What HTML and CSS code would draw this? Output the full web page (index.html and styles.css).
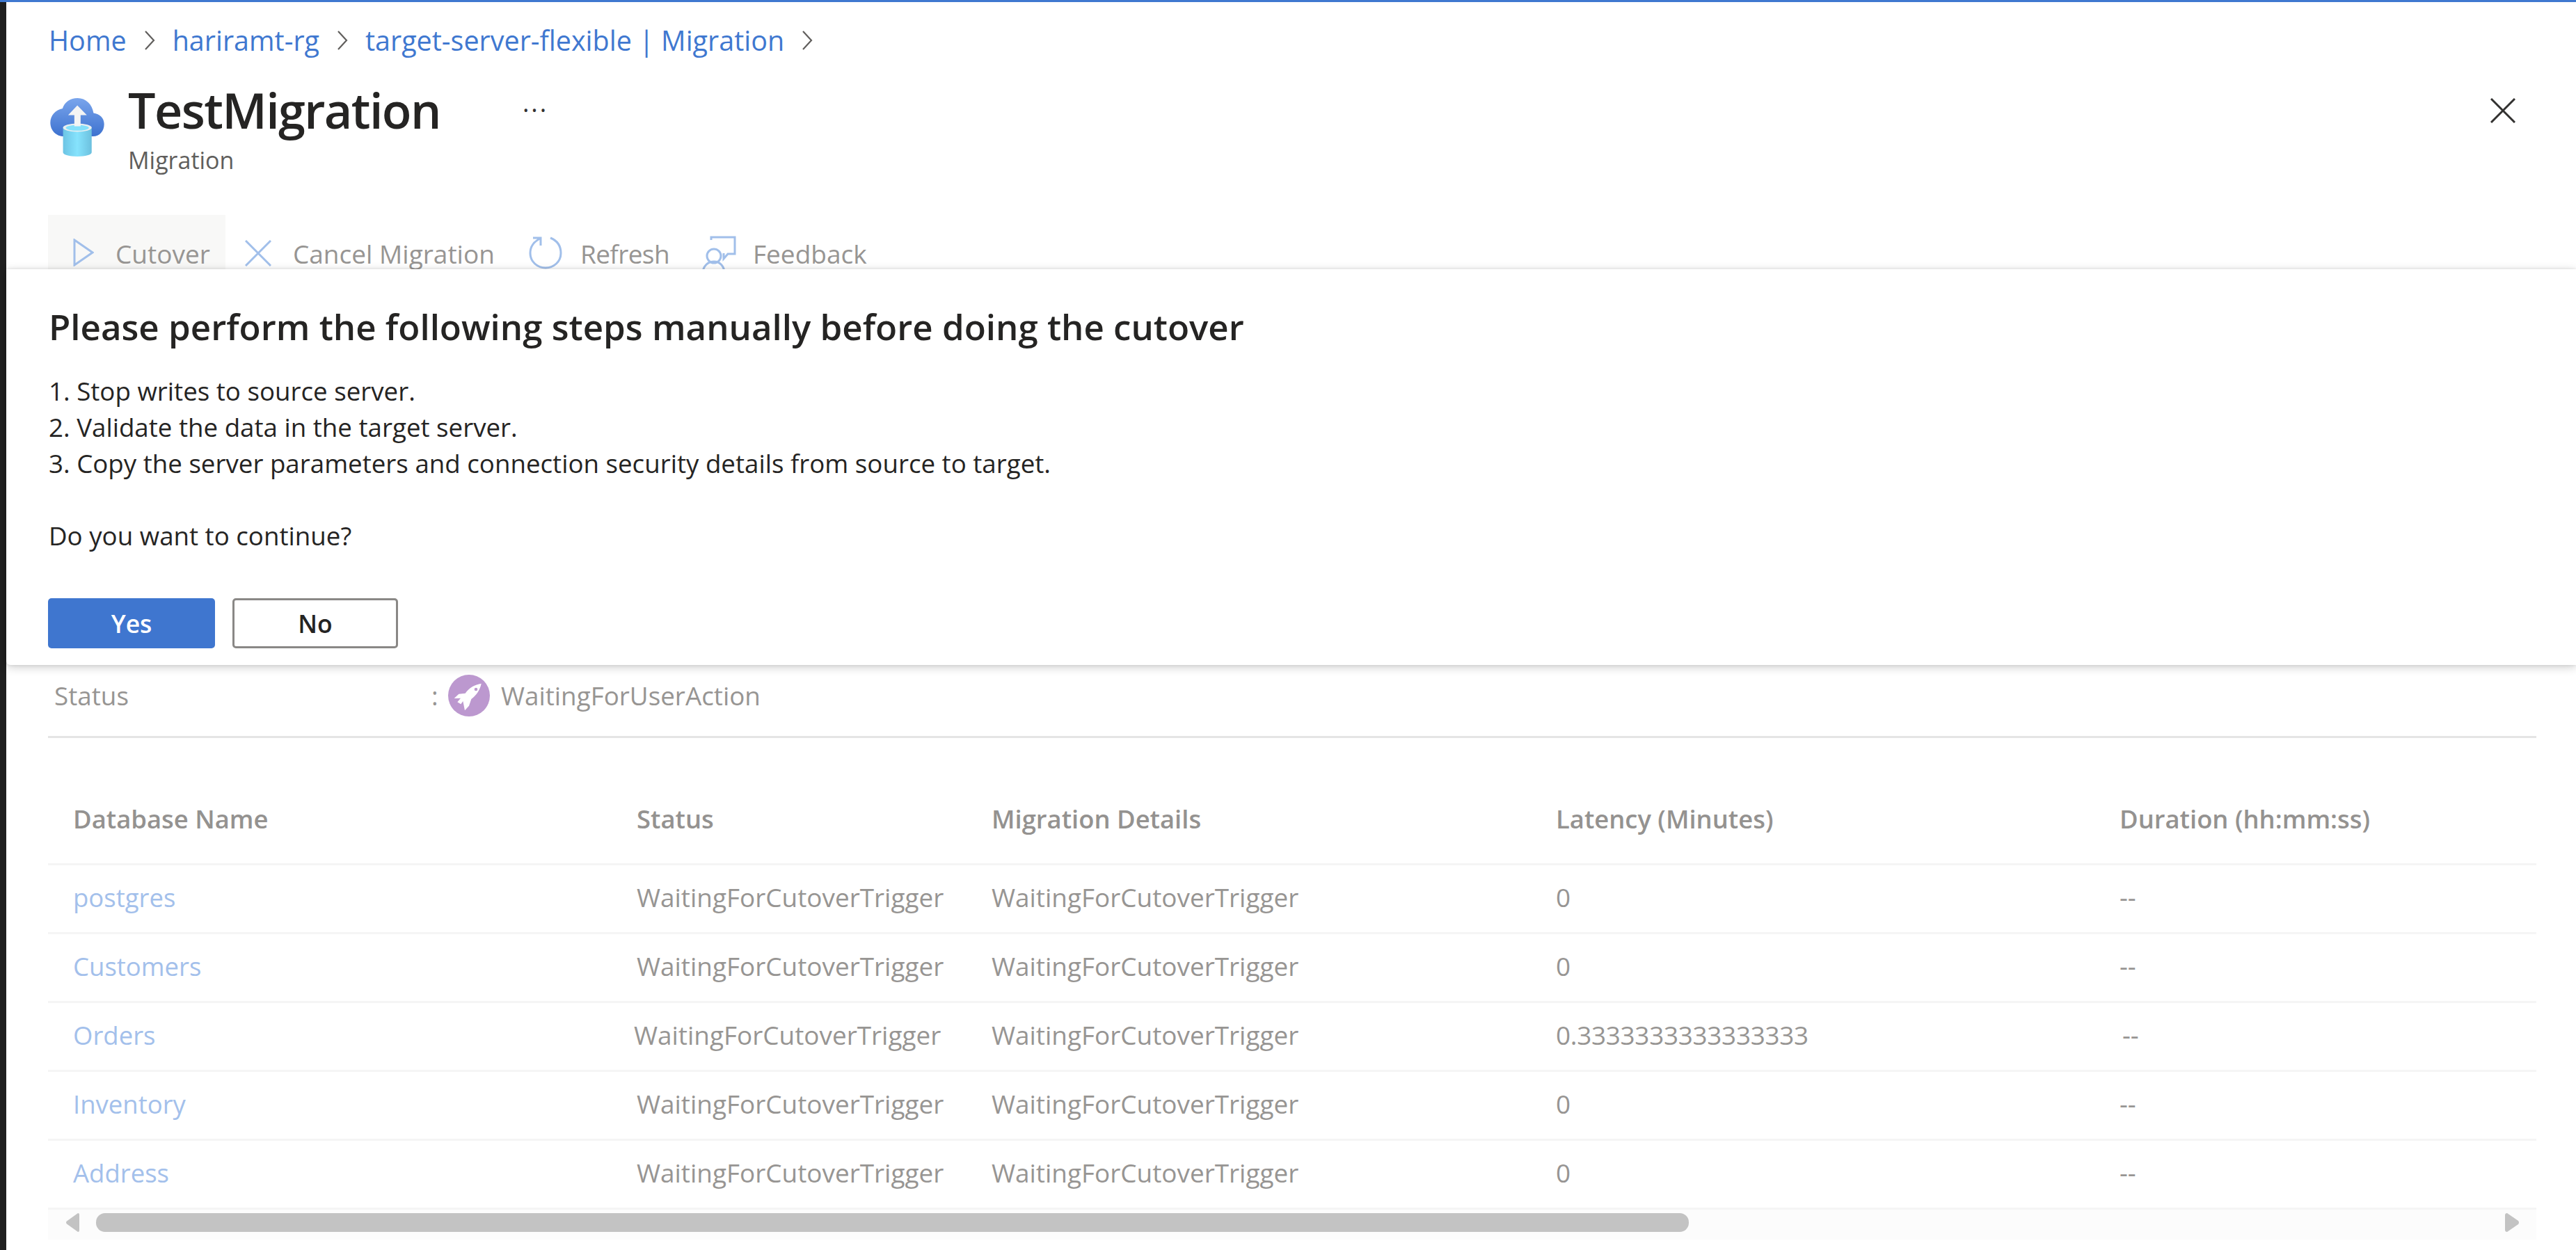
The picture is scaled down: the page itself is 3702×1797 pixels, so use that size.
FILE: index.html
```html
<!DOCTYPE html>
<html lang="en">
<head>
<meta charset="utf-8">
<title>TestMigration</title>
<link rel="stylesheet" href="styles.css">
</head>
<body>
<div class="app">
  <div class="topline"></div>
  <div class="shell">
    <div class="rail"></div>
    <main class="main">
      <nav class="crumbs">
        <a class="crumb">Home</a>
        <svg class="chev" viewBox="0 0 16 30"><path d="M2 2 L14 15 L2 28"/></svg>
        <a class="crumb">hariramt-rg</a>
        <svg class="chev" viewBox="0 0 16 30"><path d="M2 2 L14 15 L2 28"/></svg>
        <a class="crumb">target-server-flexible | Migration</a>
        <svg class="chev" viewBox="0 0 16 30"><path d="M2 2 L14 15 L2 28"/></svg>
      </nav>
      <header class="head">
        <svg class="logo" viewBox="97 122 233 253">
          <defs>
            <linearGradient id="cloud" x1="0" y1="0" x2="0" y2="1"><stop offset="0" stop-color="#7aa5ec"/><stop offset="1" stop-color="#3d72cf"/></linearGradient>
            <linearGradient id="can" x1="0" y1="0" x2="1" y2="0"><stop offset="0" stop-color="#6cc4e4"/><stop offset=".5" stop-color="#86e3fd"/><stop offset="1" stop-color="#6cc0de"/></linearGradient>
          </defs>
          <path fill="url(#cloud)" d="M157 288 C122 288 97 262 97 228 C97 197 120 172 150 167 C158 140 184 122 215 122 C250 122 278 148 284 187 C310 191 330 208 330 235 C330 265 310 288 282 288 Z"/>
          <path fill="url(#can)" d="M152 250 L276 250 L276 357 C276 368 248 375 214 375 C180 375 152 368 152 357 Z"/>
          <ellipse cx="214" cy="250" rx="62" ry="18" fill="#e8eef0"/>
          <ellipse cx="214" cy="251" rx="50" ry="12" fill="#84e0fb"/>
          <path fill="#f4f4f4" d="M214 154 L255 196 L228 196 L228 244 L201 244 L201 196 L174 196 Z"/>
        </svg>
        <div class="head-text">
          <div class="title-row"><h1 class="title">TestMigration</h1><span class="dots">···</span></div>
          <div class="subtitle">Migration</div>
        </div>
        <svg class="close" viewBox="0 0 36 36"><path d="M1 1 L35 35 M35 1 L1 35"/></svg>
      </header>
      <div class="toolbar">
        <div class="tool tool-active">
          <svg class="tool-icon ic-play" viewBox="0 0 30 40"><path d="M2 2 L28 20 L2 38 Z"/></svg>
          <span>Cutover</span>
        </div>
        <div class="tool">
          <svg class="tool-icon ic-x" viewBox="0 0 38 38"><path d="M1 1 L37 37 M37 1 L1 37"/></svg>
          <span>Cancel Migration</span>
        </div>
        <div class="tool">
          <svg class="tool-icon ic-refresh" viewBox="0 0 48 48"><path d="M31 3 C41 7 46 15 46 25 C46 37 36 46 24 46 C12 46 2 37 2 25 C2 15 8 8 16 4 M6 3 L17 3 L17 14"/></svg>
          <span class="tight">Refresh</span>
        </div>
        <div class="tool">
          <svg class="tool-icon ic-feedback" viewBox="0 0 50 56"><path d="M14 6 L14 2 L48 2 L48 26 L38 26 L32 33 L32 25 M36 28"/><circle cx="18" cy="29" r="10"/><path d="M2 54 C2 44 9 37 18 37 C27 37 33 44 33 54"/></svg>
          <span>Feedback</span>
        </div>
      </div>
      <section class="dialog">
        <h2 class="dialog-title">Please perform the following steps manually before doing the cutover</h2>
        <div class="dialog-body">
          <div>1. Stop writes to source server.</div>
          <div>2. Validate the data in the target server.</div>
          <div>3. Copy the server parameters and connection security details from source to target.</div>
          <div class="blank"></div>
          <div>Do you want to continue?</div>
        </div>
        <div class="actions">
          <button class="btn btn-primary">Yes</button>
          <button class="btn btn-default">No</button>
        </div>
      </section>
      <div class="status-row">
        <span class="status-label">Status</span>
        <span class="status-colon">:</span>
        <svg class="rocket" viewBox="132 36 180 180">
          <circle cx="222" cy="126" r="90" fill="#bc98cf"/>
          <path fill="#fff" fill-rule="evenodd" d="M275 74 C247 78 222 92 206 116 L178 119 L158 138 L186 137 L172 154 L187 163 L196 150 L204 190 L222 170 L232 141 C255 123 270 100 275 74 Z M252 92 A7 7 0 1 0 252.1 106 A7 7 0 1 0 252 92 Z"/>
        </svg>
        <span class="status-value">WaitingForUserAction</span>
      </div>
      <div class="table">
        <div class="row row-head">
          <div>Database Name</div><div>Status</div><div>Migration Details</div><div>Latency (Minutes)</div><div>Duration (hh:mm:ss)</div>
        </div>
        <div class="row">
          <div class="link">postgres</div><div>WaitingForCutoverTrigger</div><div>WaitingForCutoverTrigger</div><div>0</div><div>--</div>
        </div>
        <div class="row">
          <div class="link">Customers</div><div>WaitingForCutoverTrigger</div><div>WaitingForCutoverTrigger</div><div>0</div><div>--</div>
        </div>
        <div class="row row-shift">
          <div class="link">Orders</div><div>WaitingForCutoverTrigger</div><div>WaitingForCutoverTrigger</div><div class="num">0.3333333333333333</div><div>--</div>
        </div>
        <div class="row">
          <div class="link">Inventory</div><div>WaitingForCutoverTrigger</div><div>WaitingForCutoverTrigger</div><div>0</div><div>--</div>
        </div>
        <div class="row">
          <div class="link">Address</div><div>WaitingForCutoverTrigger</div><div>WaitingForCutoverTrigger</div><div>0</div><div>--</div>
        </div>
        <div class="scrollbar">
          <svg class="arrow arrow-left" viewBox="0 0 20 27"><path d="M18 0 Q20 0 20 2 L20 25 Q20 27 18 27 L2 15.5 Q0 13.5 2 11.5 Z"/></svg>
          <div class="thumb"></div>
          <svg class="arrow arrow-right" viewBox="0 0 21 27"><path d="M3 0 Q0 0 0 3 L0 24 Q0 27 3 27 L19 16 Q21 13.5 19 11 Z"/></svg>
        </div>
      </div>
    </main>
  </div>
</div>
</body>
</html>
```

FILE: styles.css
```css
* { box-sizing: border-box; }
html, body { margin: 0; padding: 0; height: 100%; background: #fff; }
body { font-family: "Open Sans", "Noto Sans", "Liberation Sans", sans-serif; font-size: 36.8px; color: #252423; overflow: hidden; }
.app { height: 1797px; display: flex; flex-direction: column; }
.topline { height: 3px; background: #3f78d0; flex: none; }
.shell { flex: 1; display: flex; min-height: 0; }
.rail { width: 9px; background: #1f1f1f; flex: none; }
.main { flex: 1; min-width: 0; display: flex; flex-direction: column; }

.crumbs { display: flex; align-items: center; height: 54px; margin-top: 28px; padding-left: 61px; font-size: 39.5px; }
.crumb { color: #3f78d0; }
.chev { width: 16px; height: 30px; margin: 0 25px 0 25px; }
.chev path { fill: none; stroke: #605e5c; stroke-width: 2.2; }

.head { display: flex; height: 224px; padding: 35px 87px 0 63px; flex: none; }
.logo { width: 78px; height: 84px; flex: none; margin-top: 21px; }
.head-text { margin-left: 34px; }
.title-row { display: flex; align-items: flex-start; height: 76px; }
.title { margin: 0; font-size: 70px; line-height: 76px; font-weight: 600; letter-spacing: -1.6px; color: #252423; }
.dots { margin-left: 118px; font-size: 36px; line-height: 76px; letter-spacing: 3px; color: #323130; }
.subtitle { margin-top: 11px; font-size: 34px; line-height: 46px; color: #605e5c; }
.close { width: 36px; height: 36px; margin-left: auto; margin-top: 21px; }
.close path { stroke: #323130; stroke-width: 3; fill: none; }

.toolbar { display: flex; height: 78px; margin-left: 60px; font-size: 37px; color: #979593; flex: none; }
.tool { display: flex; height: 100%; align-items: flex-start; }
.tool span { margin-top: 34px; line-height: 44px; }
.tool .tight { letter-spacing: -0.6px; }
.tool-active { width: 255px; background: #f8f8f7; padding-left: 36px; }
.tool-icon { flex: none; fill: none; stroke: #a1bfea; stroke-width: 3; }
.ic-play { width: 30px; height: 40px; margin-top: 34px; margin-right: 31px; }
.ic-x { width: 38px; height: 38px; margin: 36px 31px 0 28px; }
.ic-refresh { width: 48px; height: 48px; margin: 30px 26px 0 49px; }
.ic-feedback { width: 50px; height: 56px; margin: 30px 24px 0 46px; }

.dialog { position: relative; z-index: 2; height: 569px; flex: none; padding: 47px 0 0 61px; background: #fff; border-bottom-left-radius: 6px; box-shadow: 0 0 4px rgba(0,0,0,.1), 0 3px 14px rgba(0,0,0,.2); }
.dialog-title { margin: 0; font-size: 51px; line-height: 70px; font-weight: 600; color: #252423; }
.dialog-body { margin-top: 32px; font-size: 36.7px; line-height: 52px; color: #252423; }
.blank { height: 52px; }
.actions { display: flex; gap: 25px; margin-top: 64px; margin-left: -1px; }
.btn { width: 240px; height: 72px; border-radius: 5px; font: 600 35.5px "Open Sans", sans-serif; padding: 0; }
.btn-primary { background: #3f76cf; color: #fff; border: 0; }
.btn-default { width: 238px; background: #fff; color: #252423; border: 3px solid #8a8886; }

.status-row { display: flex; align-items: center; height: 88px; margin: 0 57px 0 60px; padding-left: 9px; color: #979593; flex: none; }
.status-label { width: 542px; }
.status-colon { width: 24px; }
.rocket { width: 60px; height: 60px; flex: none; }
.status-value { margin-left: 16px; }

.table { margin: 14px 57px 0 60px; padding-top: 52px; border-top: 3px solid #e5e5e5; color: #979593; font-size: 36.9px; }
.row { display: grid; grid-template-columns: 810px 510px 811px 810px 1fr; height: 99px; padding: 0 0 4px 36px; align-items: center; border-bottom: 3px solid #f5f5f5; }
.row-head { height: 131px; padding-bottom: 0; font-weight: 600; font-size: 36.4px; color: #949290; }
.link { color: #a3c0eb; font-size: 36.5px; }
.num { letter-spacing: -0.3px; }
.row-shift > :nth-child(2) { margin-left: -4px; }
.row-shift > :nth-child(5) { margin-left: 4px; }

.scrollbar { display: flex; align-items: center; height: 43px; padding-bottom: 7px; background: #fcfcfc; }
.arrow { fill: #c3c3c3; height: 27px; flex: none; }
.arrow-left { width: 20px; margin-left: 25px; }
.arrow-right { width: 21px; margin-left: auto; margin-right: 24px; }
.thumb { width: 2289px; height: 27px; margin-left: 24px; border-radius: 13px; background: #c3c3c3; }
```
